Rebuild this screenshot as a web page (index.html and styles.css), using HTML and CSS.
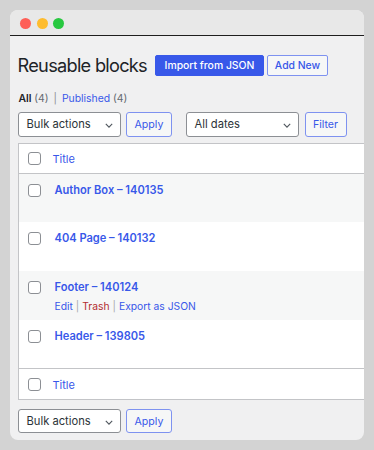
FILE: index.html
```html
<!DOCTYPE html>
<html lang="en">
<head>
<meta charset="utf-8">
<title>Reusable blocks</title>
<link rel="stylesheet" href="styles.css">
</head>
<body>
<div class="window">
  <div class="titlebar">
    <span class="dot red"></span>
    <span class="dot yellow"></span>
    <span class="dot green"></span>
  </div>
  <div class="content">
    <div class="heading">
      <h1 class="title">Reusable blocks</h1>
      <a class="btn primary">Import from JSON</a>
      <a class="btn secondary">Add New</a>
    </div>
    <ul class="subsubsub">
      <li class="current">All <span class="count">(4)</span></li>
      <li class="sep">|</li>
      <li><a>Published</a> <span class="count">(4)</span></li>
    </ul>
    <div class="tablenav">
      <div class="select bulk">Bulk actions<svg class="chev" viewBox="0 0 10 6"><path d="M1 1l4 4 4-4" /></svg></div>
      <a class="btn secondary small apply">Apply</a>
      <div class="select dates">All dates<svg class="chev" viewBox="0 0 10 6"><path d="M1 1l4 4 4-4" /></svg></div>
      <a class="btn secondary small filter">Filter</a>
    </div>
    <div class="table">
      <div class="row head">
        <span class="cb"></span><a class="col-title">Title</a>
      </div>
      <div class="row alt">
        <span class="cb"></span>
        <div class="cell"><a class="row-title">Author Box – 140135</a></div>
      </div>
      <div class="row">
        <span class="cb"></span>
        <div class="cell"><a class="row-title">404 Page – 140132</a></div>
      </div>
      <div class="row alt">
        <span class="cb"></span>
        <div class="cell">
          <a class="row-title">Footer – 140124</a>
          <div class="row-actions"><a>Edit</a><span class="bar">|</span><a class="trash">Trash</a><span class="bar">|</span><a>Export as JSON</a></div>
        </div>
      </div>
      <div class="row">
        <span class="cb"></span>
        <div class="cell"><a class="row-title">Header – 139805</a></div>
      </div>
      <div class="row head foot">
        <span class="cb"></span><a class="col-title">Title</a>
      </div>
    </div>
    <div class="tablenav bottom">
      <div class="select bulk">Bulk actions<svg class="chev" viewBox="0 0 10 6"><path d="M1 1l4 4 4-4" /></svg></div>
      <a class="btn secondary small apply">Apply</a>
    </div>
  </div>
</div>
</body>
</html>
```

FILE: styles.css
```css
* { box-sizing: border-box; }
html, body { margin: 0; padding: 0; }
body {
  background: #d3d3d3;
  font-family: Inter, "Noto Sans", sans-serif;
  color: #1d2327;
  width: 374px;
  height: 450px;
  overflow: hidden;
  padding: 10px;
}
.window {
  width: 354px;
  height: 430px;
  background: #f0f0f1;
  border-radius: 8px;
  overflow: hidden;
}
.titlebar {
  height: 26px;
  background: #e8e8e8;
  border-bottom: 1px solid #1e1e1e;
  display: flex;
  align-items: center;
  padding-left: 10px;
  gap: 5.5px;
}
.dot {
  width: 11px;
  height: 11px;
  border-radius: 50%;
  display: block;
  margin-top: 1px;
}
.red { background: #fe5f57; }
.yellow { background: #febc2e; }
.green { background: #28c840; }

.content {
  padding: 19px 0 0 7.5px;
  width: 380px;
}
.heading {
  display: flex;
  align-items: center;
  height: 21px;
}
.title {
  margin: 0 8px 0 0;
  font-size: 18.2px;
  font-weight: 400;
  letter-spacing: -0.72px;
  line-height: 21px;
  color: #1d2327;
  white-space: nowrap;
}
.btn {
  display: inline-flex;
  align-items: center;
  justify-content: center;
  flex: none;
  white-space: nowrap;
  height: 21px;
  border-radius: 2px;
  font-size: 10.4px;
  font-weight: 500;
  padding: 0;
  border: 1px solid #3858e9;
  color: #3858e9;
  background: #f6f7f7;
}
.primary {
  background: #3858e9;
  color: #fff;
  margin-right: 3px;
  width: 109px;
}
.secondary { width: 61px; border-color: #7e92f0; }

.subsubsub {
  list-style: none;
  margin: 16px 0 0 1px;
  padding: 0;
  display: flex;
  font-size: 10.4px;
  line-height: 13px;
  color: #646970;
}
.subsubsub li { white-space: pre; }
.subsubsub li.current { color: #1d2327; font-weight: 600; }
.subsubsub li.current .count { font-weight: 400; color: #646970; }
.subsubsub .sep { margin: 0 5px; color: #8c8f94; }
.subsubsub a { color: #3858e9; }

.tablenav {
  display: flex;
  align-items: center;
  margin-top: 7px;
  margin-left: 0.5px;
  height: 24.5px;
}
.select {
  position: relative;
  height: 24.5px;
  background: #fff;
  border: 1px solid #8c8f94;
  border-radius: 3px;
  font-size: 11.2px;
  color: #2c3338;
  display: flex;
  align-items: center;
  padding-left: 7.5px;
  white-space: nowrap;
}
.select.bulk { width: 103px; margin-right: 5px; }
.select.dates { width: 113px; margin-left: 14px; margin-right: 5.5px; }
.chev {
  position: absolute;
  right: 7px;
  top: 10px;
  width: 8px;
  height: 5px;
  fill: none;
  stroke: #50575e;
  stroke-width: 1.4;
}
.btn.small {
  height: 24.5px;
  border-radius: 3px;
  font-weight: 400;
  font-size: 10.6px;
}
.btn.apply { width: 46px; }
.btn.filter { width: 42px; }

.table {
  margin-top: 6px;
  width: 372px;
  border: 1px solid #c3c4c7;
  background: #fff;
}
.row {
  display: flex;
  align-items: flex-start;
  height: 48.7px;
  padding-left: 9px;
  padding-top: 10px;
}
.row.alt { background: #f6f7f7; }
.row.head {
  height: 30px;
  align-items: center;
  padding-top: 1px;
  border-bottom: 1px solid #c3c4c7;
}
.row.foot {
  border-bottom: 0;
  border-top: 1px solid #c3c4c7;
  height: 30.5px;
}
.cb {
  width: 13px;
  height: 13px;
  border: 1px solid #8c8f94;
  border-radius: 3px;
  background: #fff;
  flex: none;
}
.col-title {
  margin-left: 12px;
  font-size: 11px;
  color: #3858e9;
}
.cell {
  margin-left: 14px;
  display: flex;
  flex-direction: column;
}
.row-title {
  font-size: 11.1px;
  font-weight: 600;
  color: #3858e9;
  line-height: 13px;
  white-space: nowrap;
}
.row-actions {
  margin-top: 6px;
  font-size: 10.3px;
  line-height: 13px;
  color: #3858e9;
  white-space: nowrap;
}
.row-actions .bar { color: #a7aaad; margin: 0 3px; }
.row-actions .trash { color: #b32d2e; }
.tablenav.bottom { margin-top: 9px; }
```
